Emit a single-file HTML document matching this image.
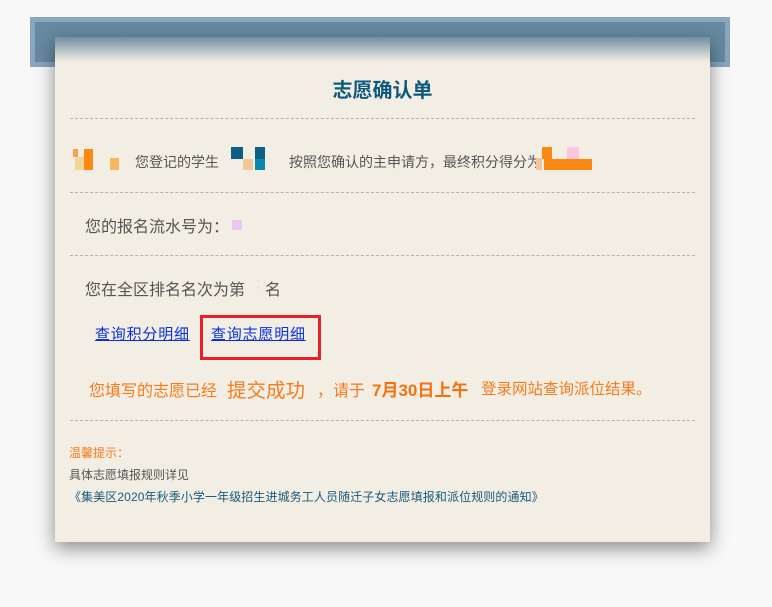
<!DOCTYPE html>
<html><head><meta charset="utf-8"><style>
*{margin:0;padding:0;box-sizing:border-box}
body{width:772px;height:607px;background:#f8f8f8;position:relative;overflow:hidden;font-family:"Liberation Sans","Noto Sans CJK SC",sans-serif}
.band{position:absolute;left:30px;top:17px;width:700px;height:50px;background:#668aa0;border:5px solid #8aa6bf}
.paper{position:absolute;left:55px;top:37px;width:655px;height:505px;background:#f2eee4;box-shadow:0 6px 18px rgba(0,0,0,.45)}
.fade{position:absolute;left:0;top:0;width:100%;height:25px;background:linear-gradient(#6f8fa3,#f2eee4)}
.t{position:absolute;white-space:nowrap}
.hr{position:absolute;left:15px;width:625px;border-top:1px dashed #b5b2aa}
.blk{position:absolute;display:inline-block}
.o{color:#f87a1a}
</style></head><body>
<div class="band"></div>
<div class="paper">
<div class="fade"></div>
<div class="t" style="left:0;width:655px;text-align:center;top:37px;font-size:20px;font-weight:bold;color:#0d5a7d">志愿确认单</div>
<div class="hr" style="top:81px"></div>
<div class="blk" style="left:18px;top:112px;width:5px;height:8px;background:#f9a050"></div>
<div class="blk" style="left:20px;top:120px;width:9px;height:13px;background:#f3d595"></div>
<div class="blk" style="left:29px;top:112px;width:9px;height:21px;background:#fb8a14"></div>
<div class="blk" style="left:55px;top:121px;width:9px;height:12px;background:#f9b860"></div>
<div class="t" style="left:80px;top:115px;font-size:14px;color:#555">您登记的学生</div>
<div class="blk" style="left:176px;top:110px;width:12px;height:12px;background:#0b5f82"></div>
<div class="blk" style="left:188px;top:122px;width:10px;height:11px;background:#f2c79b"></div>
<div class="blk" style="left:200px;top:110px;width:10px;height:23px;background:#0b5f82"></div>
<div class="blk" style="left:200px;top:122px;width:10px;height:11px;background:#0a86b0"></div>
<div class="t" style="left:234px;top:115px;font-size:14px;color:#555">按照您确认的主申请方，最终积分得分为</div>
<div class="blk" style="left:487px;top:110px;width:10px;height:12px;background:#fb8a14"></div>
<div class="blk" style="left:512px;top:110px;width:12px;height:12px;background:#fbc6de"></div>
<div class="blk" style="left:481px;top:121px;width:6px;height:12px;background:#f2c79b"></div>
<div class="blk" style="left:489px;top:122px;width:48px;height:11px;background:#fb8a14"></div>
<div class="hr" style="top:155px"></div>
<div class="t" style="left:30px;top:176px;font-size:16px;color:#555">您的报名流水号为：</div>
<div class="blk" style="left:177px;top:183px;width:10px;height:10px;background:#edc6f0"></div>
<div class="hr" style="top:218px"></div>
<div class="t" style="left:30px;top:239px;font-size:16px;color:#555">您在全区排名名次为第</div>
<div class="t" style="left:201px;top:239px;font-size:16px;color:#ddd">:</div>
<div class="t" style="left:210px;top:239px;font-size:16px;color:#555">名</div>
<div class="t" style="left:40px;top:286px;font-size:15px;letter-spacing:0.8px;color:#0a2ee0;text-decoration:underline">查询积分明细</div>
<div class="blk" style="left:145px;top:278px;width:121px;height:45px;border:3px solid #e8202a"></div>
<div class="t" style="left:156px;top:286px;font-size:15px;letter-spacing:0.8px;color:#0a2ee0;text-decoration:underline">查询志愿明细</div>
<div class="t o" style="left:34px;top:340px;font-size:16px">您填写的志愿已经</div>
<div class="t o" style="left:172px;top:337px;font-size:19.5px">提交成功</div>
<div class="t o" style="left:262px;top:340px;font-size:16px">，</div>
<div class="t o" style="left:278px;top:340px;font-size:16px">请于</div>
<div class="t" style="left:317px;top:339px;font-size:17px;font-weight:bold;color:#f77010">7月30日上午</div>
<div class="t o" style="left:426px;top:340px;font-size:15.5px">登录网站查询派位结果。</div>
<div class="hr" style="top:383px"></div>
<div class="t o" style="left:14px;top:407px;font-size:12px">温馨提示：</div>
<div class="t" style="left:14px;top:429px;font-size:12px;color:#555">具体志愿填报规则详见</div>
<div class="t" style="left:14px;top:451px;font-size:12px;color:#1a5a7a;letter-spacing:0.1px">《集美区2020年秋季小学一年级招生进城务工人员随迁子女志愿填报和派位规则的通知》</div>
</div>
</body></html>
